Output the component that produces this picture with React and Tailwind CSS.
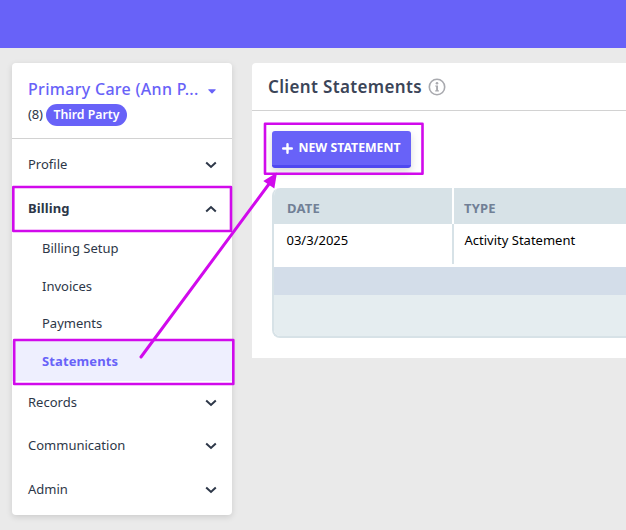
import { Fragment } from "react"

const menu = [
    { label: "Profile", height: "h-11" },
    {
        label: "Billing",
        height: "h-11",
        open: true,
        items: [
            { label: "Billing Setup", height: "h-9" },
            { label: "Invoices", height: "h-[39px]" },
            { label: "Payments", height: "h-[35px]" },
            { label: "Statements", height: "h-10", active: true },
        ],
    },
    { label: "Records", height: "h-[43px]" },
    { label: "Communication", height: "h-[43px]" },
    { label: "Admin", height: "h-[45px]" },
]

const Chevron = ({ open }) => (
    <svg
        width="12"
        height="8"
        viewBox="0 0 12 8"
        className={open ? "rotate-180" : ""}
        fill="none"
        stroke="#2d3748"
        strokeWidth="2"
    >
        <path d="M1.2 1.5 6 6l4.8-4.5" />
    </svg>
)

const Sidebar = () => (
    <aside className="w-[220px] h-[452px] shrink-0 rounded bg-white shadow-[0_2px_6px_rgba(0,0,0,0.13)]">
        <div className="h-[76px] border-b border-[#d2d2d2] pl-4 pr-4 pt-[15px]">
            <div className="flex items-center justify-between text-[#6862f8]">
                <h2 className="text-[16px] leading-[22px] font-medium tracking-[0.3px] whitespace-nowrap">Primary Care (Ann P...</h2>
                <svg width="8" height="5" viewBox="0 0 8 5" className="mt-1" fill="currentColor">
                    <path d="M.6.3h6.8q.6.1.2.7L4.5 4.3q-.5.4-1 0L.4 1Q0 .4.6.3Z" />
                </svg>
            </div>
            <div className="mt-1 flex items-center gap-[3px] text-[13px] text-[#2d3748]">
                <span className="w-[15px] tracking-[-0.2px]">(8)</span>
                <span className="flex h-[22px] w-[81px] items-center justify-center rounded-full bg-[#6862f8] text-[12.3px] font-semibold text-white">
                    Third Party
                </span>
            </div>
        </div>
        <nav className="pt-1 text-[13px] text-[#2d3748]">
            {menu.map((section) => (
                <Fragment key={section.label}>
                    <div className={`flex items-center justify-between pl-4 pr-[15px] ${section.height} ${section.open ? "font-bold tracking-[0.1px]" : ""}`}>
                        <span>{section.label}</span>
                        <Chevron open={section.open} />
                    </div>
                    {section.items?.map((item) => (
                        <div
                            key={item.label}
                            className={`flex items-center pl-[30px] ${item.height} ${
                                item.active ? "bg-[#eeeffe] pt-0.5 font-bold tracking-[0.1px] text-[#6862f8]" : ""
                            }`}
                        >
                            {item.label}
                        </div>
                    ))}
                </Fragment>
            ))}
        </nav>
    </aside>
)

const StatementsTable = () => (
    <div className="mt-5 h-[150px] rounded-l-lg border-2 border-r-0 border-t-0 border-[#d7e2e7] overflow-hidden text-[13px]">
        <div className="flex h-9 bg-[#d7e2e7] font-bold tracking-[0.2px] text-[#718096]">
            <div className="w-[180px] border-r-2 border-white pl-[13px] pt-[11px]">DATE</div>
            <div className="pl-[10px] pt-[11px]">TYPE</div>
        </div>
        <div className="flex h-[43px] text-black">
            <div className="h-10 w-[180px] border-r-2 border-[#d7e2e7] pl-[12.5px] pt-[7px]">03/3/2025</div>
            <div className="pl-[10.5px] pt-[7px]">Activity Statement</div>
        </div>
        <div className="h-7 bg-[#d3dde9]" />
        <div className="h-[41px] bg-[#e5edf0]" />
    </div>
)

const ClientStatements = () => (
    <main className="h-[295px] flex-1 rounded-tl bg-white">
        <header className="flex h-12 items-center gap-[6px] border-b border-[#d2d2d2] pl-4">
            <h1 className="text-[17px] font-semibold tracking-[0.35px] text-[#3b4558]">Client Statements</h1>
            <svg width="18" height="18" viewBox="0 0 18 18" fill="#a9aaaf">
                <circle cx="9" cy="9" r="7.7" fill="none" stroke="#a9aaaf" strokeWidth="1.6" />
                <circle cx="9" cy="5.3" r="1.3" />
                <path d="M7.2 7.4H10v4.8h.9v1.2H7.2v-1.2h.9V8.6h-.9Z" />
            </svg>
        </header>
        <div className="pl-5 pt-5">
            <button className="flex h-[37px] w-[139px] items-center justify-center gap-[5px] rounded-[3px] border-b-[3px] border-[#4f48f0] bg-[#6862f8] text-[12.3px] font-bold text-white shadow-[0_4px_9px_rgba(0,0,0,0.15)]">
                <svg width="11" height="11" viewBox="0 0 11 11" stroke="currentColor" strokeWidth="2.4" strokeLinecap="round">
                    <path d="M5.5 1.2v8.6M1.2 5.5h8.6" />
                </svg>
                NEW STATEMENT
            </button>
            <StatementsTable />
        </div>
    </main>
)

// Callouts drawn over the page: three frames and an arrow
const Highlights = () => (
    <svg className="absolute left-0 top-0 pointer-events-none" width="626" height="530" fill="none" stroke="#d10aec" strokeWidth="2.6" strokeLinejoin="round">
        <rect x="13.3" y="187" width="217.7" height="44" />
        <rect x="14.2" y="340" width="219.1" height="44" />
        <rect x="265" y="123.8" width="157.5" height="50" />
        <path d="M141 357 269 184" strokeWidth="3" strokeLinecap="round" />
        <path d="M277 172.5 274.3 188.5 263.3 181Z" fill="#d10aec" stroke="none" />
    </svg>
)

export default function App() {
    return (
        <div className="relative h-[530px] overflow-hidden bg-[#eaeaea] font-['Noto_Sans',sans-serif]">
            <div className="h-12 bg-[#6862f8]" />
            <div className="flex items-start gap-5 pl-3 pt-[15px]">
                <Sidebar />
                <ClientStatements />
            </div>
            <Highlights />
        </div>
    )
}
